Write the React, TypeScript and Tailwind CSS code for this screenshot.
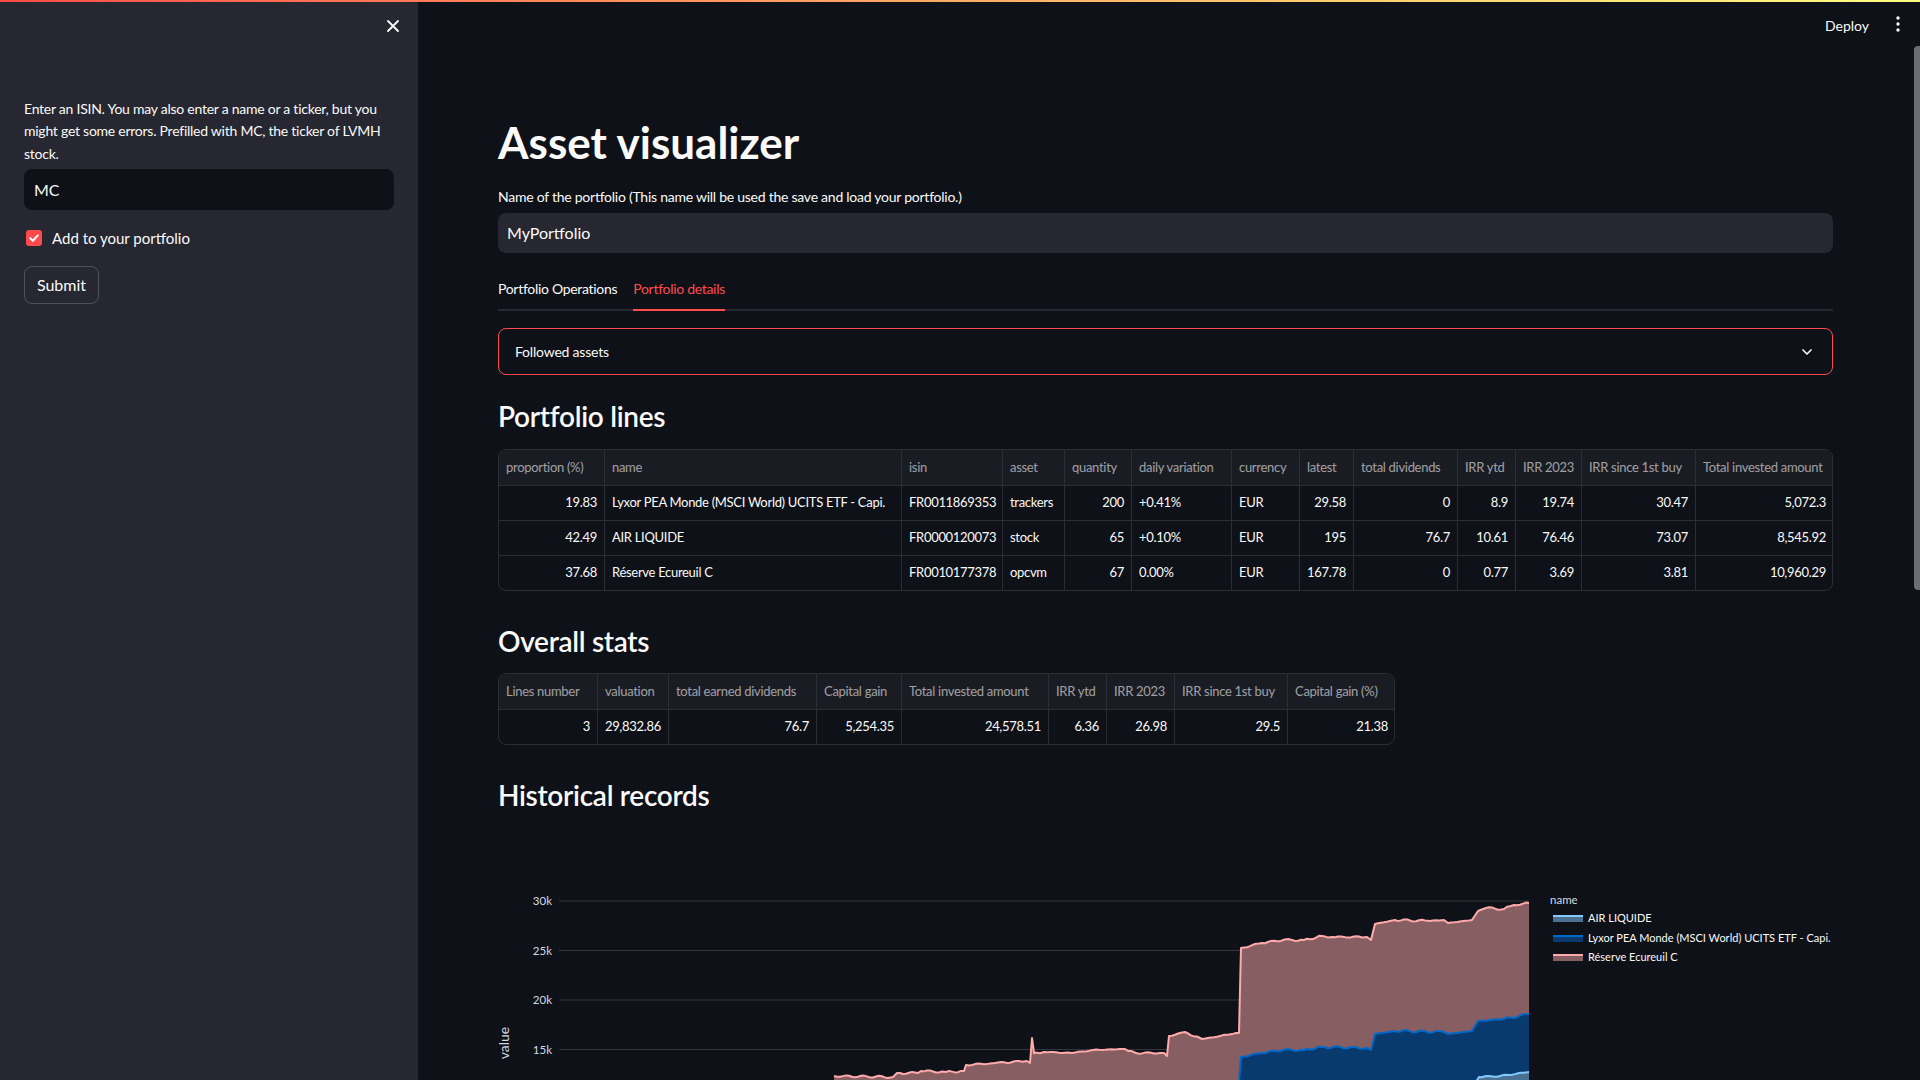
import { ChevronDown } from 'lucide-react';

const linesHead = [
  'proportion (%)',
  'name',
  'isin',
  'asset',
  'quantity',
  'daily variation',
  'currency',
  'latest',
  'total dividends',
  'IRR ytd',
  'IRR 2023',
  'IRR since 1st buy',
  'Total invested amount',
];

// true = right aligned (numbers)
const linesAlign = [true, false, false, false, true, false, false, true, true, true, true, true, true];

const linesRows = [
  ['19.83', 'Lyxor PEA Monde (MSCI World) UCITS ETF - Capi.', 'FR0011869353', 'trackers', '200', '+0.41%', 'EUR', '29.58', '0', '8.9', '19.74', '30.47', '5,072.3'],
  ['42.49', 'AIR LIQUIDE', 'FR0000120073', 'stock', '65', '+0.10%', 'EUR', '195', '76.7', '10.61', '76.46', '73.07', '8,545.92'],
  ['37.68', 'Réserve Ecureuil C', 'FR0010177378', 'opcvm', '67', '0.00%', 'EUR', '167.78', '0', '0.77', '3.69', '3.81', '10,960.29'],
];

const statsHead = [
  'Lines number',
  'valuation',
  'total earned dividends',
  'Capital gain',
  'Total invested amount',
  'IRR ytd',
  'IRR 2023',
  'IRR since 1st buy',
  'Capital gain (%)',
];
const statsRow = ['3', '29,832.86', '76.7', '5,254.35', '24,578.51', '6.36', '26.98', '29.5', '21.38'];

type Pt = [number, number];

const pinkLine: Pt[] = [
  [834, 1076], [893, 1077], [897, 1073], [918, 1073], [921, 1071], [946, 1072], [964, 1071], [966, 1065],
  [995, 1063], [1027, 1061], [1030, 1063], [1032, 1038], [1034, 1053], [1044, 1052], [1072, 1053],
  [1093, 1050], [1125, 1049], [1136, 1053], [1164, 1053], [1167, 1056], [1169, 1036], [1185, 1032],
  [1202, 1039], [1220, 1036], [1236, 1033], [1239, 1033], [1241, 948], [1262, 943], [1283, 940],
  [1304, 940], [1322, 936], [1332, 937], [1367, 937], [1371, 940], [1375, 924], [1395, 920], [1430, 921],
  [1444, 920], [1448, 923], [1472, 920], [1478, 911], [1486, 908], [1504, 909], [1514, 905], [1529, 903],
];

const blueLine: Pt[] = [
  [1239, 1082], [1241, 1057], [1262, 1053], [1283, 1050], [1304, 1050], [1322, 1047], [1367, 1048],
  [1371, 1050], [1375, 1034], [1395, 1031], [1444, 1032], [1448, 1034], [1472, 1031], [1478, 1021],
  [1504, 1019], [1529, 1014],
];

const lightLine: Pt[] = [[1476, 1082], [1479, 1077], [1500, 1076], [1529, 1072]];

// adds a small wobble along flat segments so the lines look like daily data
function roughen(pts: Pt[]): Pt[] {
  const out: Pt[] = [];
  for (let i = 0; i < pts.length - 1; i++) {
    const [x0, y0] = pts[i];
    const [x1, y1] = pts[i + 1];
    out.push([x0, y0]);
    const dx = x1 - x0;
    if (dx > 6) {
      for (let x = x0 + 3; x < x1 - 2; x += 3) {
        const t = (x - x0) / dx;
        const w = Math.sin(x * 1.7) * 0.6 + Math.sin(x * 0.37) * 0.5;
        out.push([x, y0 + (y1 - y0) * t + w]);
      }
    }
  }
  out.push(pts[pts.length - 1]);
  return out;
}

const toLine = (pts: Pt[]) => pts.map(([x, y]) => `${x},${y.toFixed(1)}`).join(' ');
const toArea = (pts: Pt[]) => `${toLine(pts)} 1529,1085 ${pts[0][0]},1085`;

function Table({
  head,
  rows,
  cols,
  align,
}: {
  head: string[];
  rows: string[][];
  cols: string;
  align: boolean[];
}) {
  return (
    <div className="overflow-hidden rounded-lg border border-[#2c2e36] text-[13px] tracking-[-0.3px]">
      <div className={`grid ${cols} h-[35px] bg-[#1a1c24] text-[#fafafa99]`}>
        {head.map((h, i) => (
          <div
            key={h}
            className={`flex items-center overflow-hidden whitespace-nowrap px-[7px] ${i > 0 ? 'border-l border-[#2c2e36]' : ''}`}
          >
            {h}
          </div>
        ))}
      </div>
      {rows.map((r, ri) => (
        <div key={ri} className={`grid ${cols} h-[35px] border-t border-[#2c2e36] text-[#fafafa]`}>
          {r.map((c, i) => (
            <div
              key={i}
              className={`flex items-center overflow-hidden whitespace-nowrap px-[7px] ${align[i] ? 'justify-end' : ''} ${
                i > 0 ? 'border-l border-[#2c2e36]' : ''
              }`}
            >
              {c}
            </div>
          ))}
        </div>
      ))}
    </div>
  );
}

function Chart() {
  const pink = roughen(pinkLine);
  const blue = roughen(blueLine);
  const light = roughen(lightLine);
  const grid = [
    { y: 901, l: '30k' },
    { y: 950.5, l: '25k' },
    { y: 1000, l: '20k' },
    { y: 1049.5, l: '15k' },
  ];
  const legend = [
    { l: 'AIR LIQUIDE', line: '#83c9ff', fill: '#4a7191', y: 918 },
    { l: 'Lyxor PEA Monde (MSCI World) UCITS ETF - Capi.', line: '#0068c9', fill: '#083a6e', y: 938 },
    { l: 'Réserve Ecureuil C', line: '#ffabab', fill: '#875f63', y: 957 },
  ];
  return (
    <svg width="1335" height="250" className="block overflow-visible">
      <g transform="translate(-498,-830)">
        {grid.map((g) => (
          <g key={g.l}>
            <line x1="559" x2="1529" y1={g.y} y2={g.y} stroke="#33363f" strokeWidth="1" />
            <text x="552" y={g.y + 4} textAnchor="end" fontSize="11.5" fill="#d3d9e4">
              {g.l}
            </text>
          </g>
        ))}
        <text x="509" y="1043" fontSize="14" fill="#d3d9e4" textAnchor="middle" transform="rotate(-90 509 1043)">
          value
        </text>
        <polygon points={toArea(pink)} fill="#875f63" />
        <polygon points={toArea(blue)} fill="#083a6e" />
        <polygon points={toArea(light)} fill="#4a7191" />
        <polyline points={toLine(pink)} fill="none" stroke="#ffabab" strokeWidth="2" strokeLinejoin="round" />
        <polyline points={toLine(blue)} fill="none" stroke="#0068c9" strokeWidth="2" strokeLinejoin="round" />
        <polyline points={toLine(light)} fill="none" stroke="#83c9ff" strokeWidth="2" strokeLinejoin="round" />

        <text x="1550" y="904" fontSize="11.5" fill="#d3d9e4">
          name
        </text>
        {legend.map((it) => (
          <g key={it.l}>
            <rect x="1553" y={it.y - 3} width="30" height="7" fill={it.fill} />
            <line x1="1553" x2="1583" y1={it.y - 2} y2={it.y - 2} stroke={it.line} strokeWidth="2" />
            <text x="1588" y={it.y + 4} fontSize="11" fill="#fafafa">
              {it.l}
            </text>
          </g>
        ))}
      </g>
    </svg>
  );
}

export default function App() {
  return (
    <div className="relative flex h-[1080px] w-[1920px] overflow-hidden bg-[#0e1117] font-[Lato,sans-serif] text-[#fafafa]">
      {/* decoration bar */}
      <div className="absolute left-0 right-0 top-0 z-10 h-[2px] bg-gradient-to-r from-[#ff4b4b] to-[#fffd80]" />

      {/* sidebar */}
      <aside className="flex w-[418px] shrink-0 flex-col bg-[#262730] px-6">
        <div className="flex h-[52px] items-center justify-end">
          <svg width="12" height="12" viewBox="0 0 12 12" className="-mr-[5px]">
            <path d="M1 1 L11 11 M11 1 L1 11" stroke="#fafafa" strokeWidth="1.8" strokeLinecap="round" />
          </svg>
        </div>
        <p className="mt-[46px] whitespace-nowrap text-[14px] leading-[22.4px] tracking-[-0.25px]">
          Enter an ISIN. You may also enter a name or a ticker, but you
          <br />
          might get some errors. Prefilled with MC, the ticker of LVMH
          <br />
          stock.
        </p>
        <div className="mt-[4px] flex h-[41px] items-center rounded-lg bg-[#0e1117] px-[10px] text-[16px]">MC</div>
        <label className="mt-[18px] flex h-[20px] items-center gap-[10px] pl-[2px] text-[15px]">
          <span className="flex h-4 w-4 items-center justify-center rounded-[3px] bg-[#ff4b4b]">
            <svg width="12" height="12" viewBox="0 0 12 12">
              <path d="M2.2 6.2 L4.9 8.7 L9.8 3.4" fill="none" stroke="#fff" strokeWidth="2" strokeLinecap="round" strokeLinejoin="round" />
            </svg>
          </span>
          Add to your portfolio
        </label>
        <button className="mt-[18px] flex h-[38px] w-[75px] items-center justify-center rounded-lg border border-[#fafafa33] text-[16px]">
          Submit
        </button>
      </aside>

      {/* main */}
      <main className="relative flex flex-1 flex-col">
        <header className="flex h-[50px] items-center justify-end gap-[27px] pr-[20px] text-[14px]">
          <span>Deploy</span>
          <svg width="4" height="16" viewBox="0 0 4 16" className="-mt-[3px]">
            <circle cx="2" cy="2" r="1.7" fill="#fafafa" />
            <circle cx="2" cy="8" r="1.7" fill="#fafafa" />
            <circle cx="2" cy="14" r="1.7" fill="#fafafa" />
          </svg>
        </header>

        <div className="ml-[80px] flex w-[1335px] flex-col">
          <h1 className="mt-[66px] h-[52px] text-[44px] font-bold leading-[52px]">Asset visualizer</h1>

          <div className="mt-[19px] h-[20px] text-[14px] leading-[20px] tracking-[-0.25px]">
            Name of the portfolio (This name will be used the save and load your portfolio.)
          </div>
          <div className="mt-[6px] flex h-[40px] items-center rounded-lg bg-[#262730] px-[9px] text-[16px]">
            MyPortfolio
          </div>

          <div className="mt-[26px] flex gap-4 border-b-2 border-[#262730] text-[14px] tracking-[-0.3px]">
            <div className="h-[30px] leading-[20px]">Portfolio Operations</div>
            <div className="-mb-[2px] h-[32px] border-b-2 border-[#ff4b4b] leading-[20px] text-[#ff4b4b]">
              Portfolio details
            </div>
          </div>

          <div className="mt-[17px] flex h-[47px] items-center justify-between rounded-lg border border-[#ff4b4b] pl-4 pr-[17px] text-[14px] tracking-[-0.2px]">
            <span>Followed assets</span>
            <ChevronDown size={16} strokeWidth={2.5} color="#fafafa" />
          </div>

          <h3 className="mt-[23px] h-[36px] text-[28px] font-semibold leading-[36px] tracking-[-0.3px]">Portfolio lines</h3>
          <div className="mt-[15px]">
            <Table
              head={linesHead}
              rows={linesRows}
              cols="grid-cols-[105px_297px_101px_62px_67px_100px_68px_54px_104px_58px_66px_114px_138px]"
              align={linesAlign}
            />
          </div>

          <h3 className="mt-[32px] h-[36px] text-[28px] font-semibold leading-[36px] tracking-[-0.3px]">Overall stats</h3>
          <div className="mt-[14px] w-[897px]">
            <Table
              head={statsHead}
              rows={[statsRow]}
              cols="grid-cols-[98px_71px_148px_85px_147px_58px_68px_113px_108px]"
              align={statsRow.map(() => true)}
            />
          </div>

          <h3 className="mt-[32px] h-[36px] text-[28px] font-semibold leading-[36px] tracking-[-0.3px]">Historical records</h3>
          <div className="mt-[17px]">
            <Chart />
          </div>
        </div>

        {/* scrollbar thumb */}
        <div className="absolute right-0 top-[46px] h-[544px] w-[6px] rounded-l-sm bg-[#6c6d72]" />
      </main>
    </div>
  );
}
